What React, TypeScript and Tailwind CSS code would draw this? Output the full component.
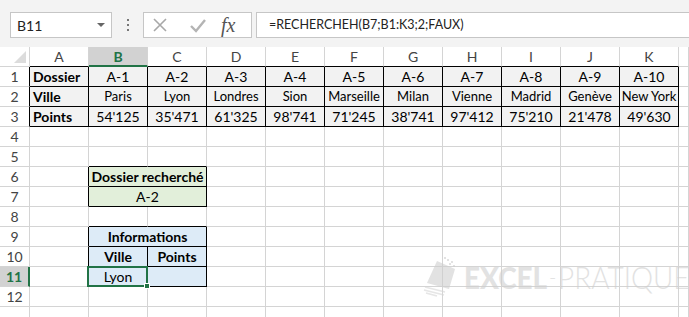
import React from 'react';

const COLS = ['A', 'B', 'C', 'D', 'E', 'F', 'G', 'H', 'I', 'J', 'K', 'L'];

const folders = ['A-1', 'A-2', 'A-3', 'A-4', 'A-5', 'A-6', 'A-7', 'A-8', 'A-9', 'A-10'];
const cities = ['Paris', 'Lyon', 'Londres', 'Sion', 'Marseille', 'Milan', 'Vienne', 'Madrid', 'Genève', 'New York'];
const points = ['54\'125', '35\'471', '61\'325', '98\'741', '71\'245', '38\'741', '97\'412', '75\'210', '21\'478', '49\'630'];

// cells with a black border (row number, column index with A = 0)
const isBoxed = (r: number, c: number) => {
  if (r >= 1 && r <= 3 && c >= 0 && c <= 10) return true;
  if ((r === 6 || r === 7) && (c === 1 || c === 2)) return true;
  if (r >= 9 && r <= 11 && (c === 1 || c === 2)) return true;
  return false;
};

const bgOf = (r: number, c: number) => {
  if (r >= 1 && r <= 3 && c <= 10) return 'bg-[#f2f2f2]';
  if ((r === 6 || r === 7) && (c === 1 || c === 2)) return 'bg-[#e2efda]';
  if (r >= 9 && r <= 11 && (c === 1 || c === 2)) return 'bg-[#ddebf7]';
  return 'bg-white';
};

type CellInfo = { text?: string; bold?: boolean; left?: boolean; small?: boolean; span?: number };

const cellAt = (r: number, c: number): CellInfo | null => {
  if (c > 10) return null;
  if (r === 1) return c === 0 ? { text: 'Dossier', bold: true, left: true } : { text: folders[c - 1] };
  if (r === 2) return c === 0 ? { text: 'Ville', bold: true, left: true } : { text: cities[c - 1], small: true };
  if (r === 3) return c === 0 ? { text: 'Points', bold: true, left: true } : { text: points[c - 1] };
  if (r === 6 && c === 1) return { text: 'Dossier recherché', bold: true, span: 2 };
  if (r === 7 && c === 1) return { text: 'A-2', span: 2 };
  if (r === 9 && c === 1) return { text: 'Informations', bold: true, span: 2 };
  if (r === 10 && c === 1) return { text: 'Ville', bold: true };
  if (r === 10 && c === 2) return { text: 'Points', bold: true };
  if (r === 11 && c === 1) return { text: 'Lyon' };
  return null;
};

const Cell = ({ r, c }: { r: number; c: number }) => {
  const info = cellAt(r, c);
  const span = info?.span ?? 1;
  const last = c + span - 1;
  const right = isBoxed(r, last) || isBoxed(r, last + 1) ? 'border-r-black' : 'border-r-[#d4d4d4]';
  const bottom = isBoxed(r, c) || isBoxed(r + 1, c) ? 'border-b-black' : 'border-b-[#d4d4d4]';
  const selected = r === 11 && c === 1;
  return (
    <div
      className={`relative flex items-center border-r border-b ${right} ${bottom} ${bgOf(r, c)} ${
        span === 2 ? 'col-span-2' : ''
      } ${info?.left ? 'justify-start pl-[3px]' : 'justify-center'} ${info?.bold ? 'font-bold' : ''} ${
        info?.small ? 'text-[13px]' : 'text-[14px]'
      } text-black whitespace-nowrap overflow-visible`}
    >
      {info?.text}
      {selected && (
        <div className="absolute -left-[2px] -top-[1px] -right-px -bottom-px z-10 border-2 border-[#217346]">
          <div className="absolute -right-[4px] -bottom-[4px] w-[6px] h-[6px] bg-[#217346] border border-white" />
        </div>
      )}
    </div>
  );
};

const Watermark = () => (
  <div className="absolute left-[423px] top-[257px] flex items-center pointer-events-none opacity-60">
    <svg width="36" height="40" viewBox="0 0 36 40">
      <polygon points="14,4 32,12 26,32 4,26" fill="#cfcfcf" />
      <path d="M2 30 L22 35 M1 33 L21 38 M3 36 L14 39" stroke="#d6d6d6" strokeWidth="1.5" />
      <rect x="24" y="2" width="2" height="2" fill="#cfcfcf" />
      <rect x="28" y="4" width="2" height="2" fill="#cfcfcf" />
      <rect x="30" y="8" width="2" height="2" fill="#cfcfcf" />
      <rect x="26" y="6" width="2" height="2" fill="#cfcfcf" />
      <rect x="21" y="0" width="2" height="2" fill="#cfcfcf" />
    </svg>
    <div className="ml-[5px] flex items-center text-[31px] leading-none text-[#cfcfcf] font-['Lato',sans-serif] scale-x-[0.9] origin-left">
      <span className="font-black">EXCEL</span>
      <span className="font-light mx-[2px] text-[22px]">-</span>
      <span className="font-light">PRATIQUE</span>
    </div>
  </div>
);

export default function App() {
  const rows = Array.from({ length: 13 }, (_, i) => i + 1);
  return (
    <div className="relative w-[689px] h-[317px] overflow-hidden bg-white font-['Lato',sans-serif] text-[#222]">
      {/* formula bar */}
      <div className="h-[47px] bg-[#f3f3f3] flex items-start pt-[12px] pl-[10px]">
        <div className="w-[102px] h-[26px] bg-white border border-[#c6c6c6] flex items-center pl-[6px] pr-[6px] justify-between">
          <span className="text-[14px] text-[#222]">B11</span>
          <svg width="8" height="5" viewBox="0 0 8 5">
            <polygon points="0,0 8,0 4,4" fill="#666" />
          </svg>
        </div>
        <div className="w-[31px] h-[26px] flex flex-col items-center justify-center gap-[3px]">
          <div className="w-[2px] h-[2px] bg-[#777]" />
          <div className="w-[2px] h-[2px] bg-[#777]" />
          <div className="w-[2px] h-[2px] bg-[#777]" />
        </div>
        <div className="w-[109px] h-[26px] bg-white border border-[#c6c6c6] flex items-center pl-[8px]">
          <svg width="16" height="16" viewBox="0 0 16 16">
            <path d="M2 2 L14 14 M14 2 L2 14" stroke="#a8a8a8" strokeWidth="1.6" />
          </svg>
          <svg className="ml-[21px]" width="18" height="16" viewBox="0 0 18 16">
            <path d="M2 9 L7 14 L16 3" stroke="#b4b4b4" strokeWidth="2.4" fill="none" />
          </svg>
          <span className="ml-[14px] italic text-[20px] leading-none text-[#555] font-['Liberation_Serif',serif]">
            fx
          </span>
        </div>
        <div className="ml-[4px] flex-1 h-[26px] bg-white border border-[#c6c6c6] border-r-0 flex items-center pl-[12px]">
          <span className="text-[12.5px] text-[#222]">=RECHERCHEH(B7;B1:K3;2;FAUX)</span>
        </div>
      </div>

      {/* sheet */}
      <div className="grid grid-cols-[30px_repeat(11,59px)_10px] auto-rows-[20px]">
        <div className="relative border-r border-b border-[#d4d4d4] bg-white">
          <svg className="absolute right-[3px] bottom-[3px]" width="12" height="12" viewBox="0 0 12 12">
            <polygon points="12,0 12,12 0,12" fill="#dcdcdc" />
          </svg>
        </div>
        {COLS.map((col, c) => {
          const sel = col === 'B';
          return (
            <div
              key={col}
              className={`flex items-center justify-center text-[14px] border-r border-r-[#d4d4d4] ${
                sel
                  ? 'bg-[#d2d2d2] border-b-2 border-b-[#217346] text-[#217346] font-bold'
                  : `bg-white border-b ${isBoxed(1, c) ? 'border-b-black' : 'border-b-[#d4d4d4]'} text-[#444]`
              }`}
            >
              {c <= 10 ? col : ''}
            </div>
          );
        })}
        {rows.map((r) => (
          <React.Fragment key={r}>
            <div
              className={`flex items-center justify-center text-[14px] border-b border-b-[#d4d4d4] ${
                r === 11
                  ? 'bg-[#d2d2d2] border-r-2 border-r-[#217346] text-[#217346] font-bold'
                  : `bg-white border-r ${isBoxed(r, 0) ? 'border-r-black' : 'border-r-[#d4d4d4]'} text-[#444]`
              }`}
            >
              {r <= 12 ? r : ''}
            </div>
            {COLS.map((_, c) => {
              const prev = cellAt(r, c - 1);
              if (prev?.span === 2) return null;
              return <Cell key={c} r={r} c={c} />;
            })}
          </React.Fragment>
        ))}
      </div>

      <Watermark />
    </div>
  );
}
